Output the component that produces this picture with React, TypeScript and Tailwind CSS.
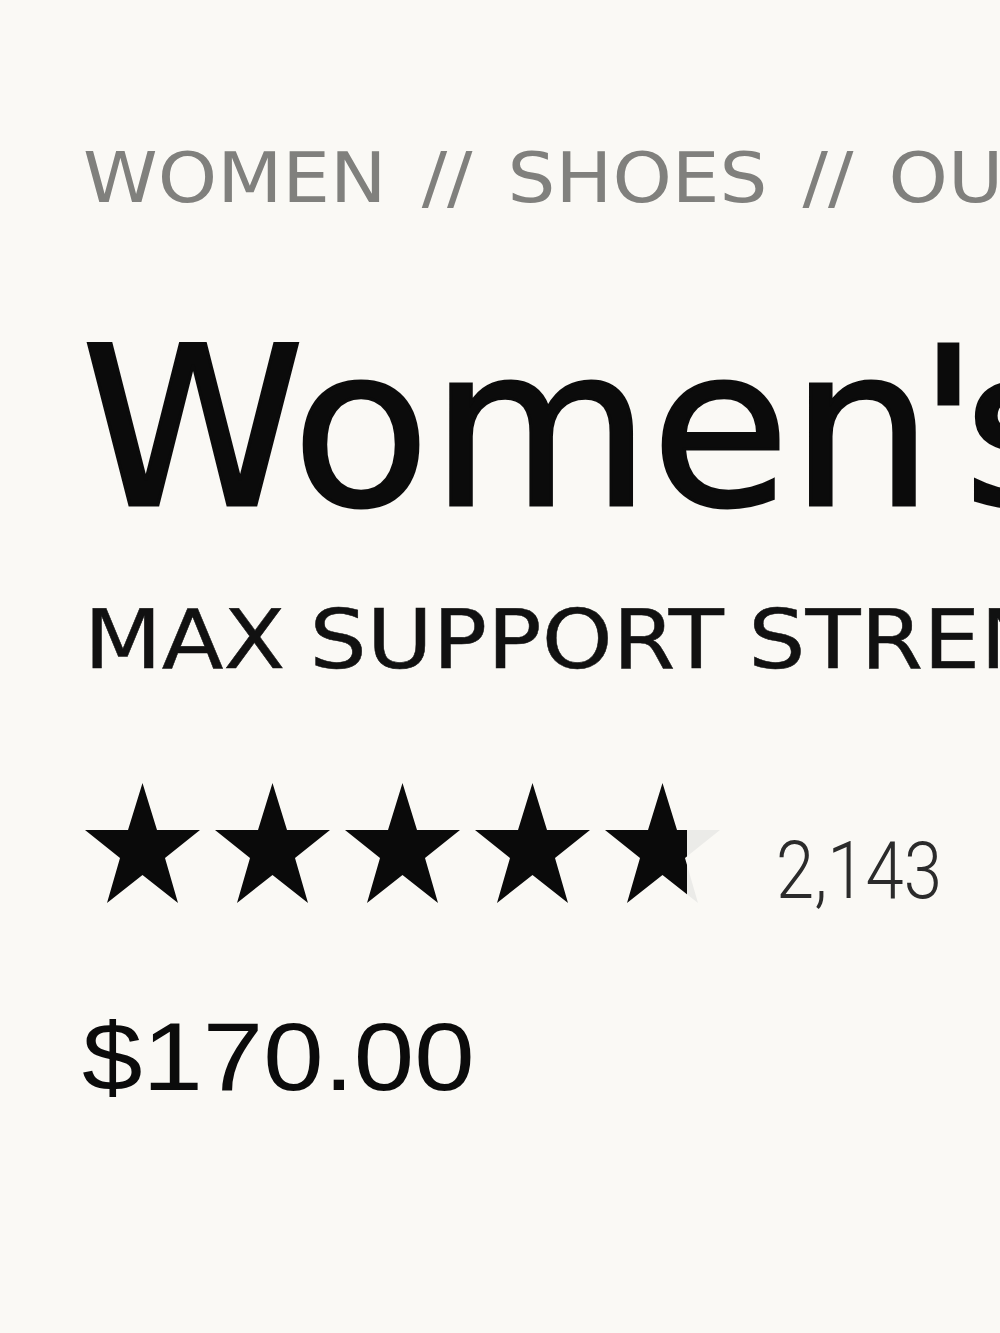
const crumbs = ["WOMEN", "SHOES", "OUTLET"];
const ratings = [1, 1, 1, 1, 0.71];

const STAR = "57.5,0 72,47 115,47 80,75 93,120 57.5,92 22,120 35,75 0,47 43,47";

function Star({ fill, id }: { fill: number; id: string }) {
  return (
    <svg viewBox="0 0 115 120" className="h-[120px] w-[115px] shrink-0">
      <defs>
        <linearGradient id={id} x1="0" x2="1" y1="0" y2="0">
          <stop offset={fill} stopColor="#0a0a0a" />
          <stop offset={fill} stopColor="#ebebe8" />
        </linearGradient>
      </defs>
      <polygon points={STAR} fill={`url(#${id})`} />
    </svg>
  );
}

export default function App() {
  return (
    <main className="h-screen w-full overflow-hidden bg-[#faf9f5] pl-[85px] pt-[144px] font-['DejaVu_Sans',sans-serif]">
      {/* breadcrumb */}
      <nav className="-ml-[2px] flex origin-left scale-x-[1.095] gap-[32px] whitespace-nowrap text-[69px] leading-none text-[#80807d]">
        {crumbs.map((c, i) => (
          <span key={c} className="flex gap-[32px]">
            {i > 0 && <span>//</span>}
            <span>{c}</span>
          </span>
        ))}
      </nav>

      <h1 className="-ml-[4px] mt-[104px] origin-left scale-x-[1.02] whitespace-nowrap text-[222px] leading-none text-[#0b0b0b] [-webkit-text-stroke:3px_#0b0b0b]">
        Women<span className="-ml-[16px] -mr-[16px]">'</span>s Gaviota 5
      </h1>

      <p className="-ml-[1px] mt-[60px] origin-left scale-x-[1.1] whitespace-nowrap text-[82px] leading-none text-[#111] [word-spacing:-4px] [-webkit-text-stroke:0.5px_#111]">
        MAX SUPPORT STRENGTH
      </p>

      {/* rating */}
      <div className="mt-[102px] flex items-start">
        <div className="flex gap-[15px]">
          {ratings.map((r, i) => (
            <Star key={i} fill={r} id={`star-${i}`} />
          ))}
        </div>
        <span className="ml-[56px] mt-[48px] inline-block origin-left scale-x-[0.86] font-['Roboto',sans-serif] text-[80px] font-light leading-none text-[#2b2b2b]">
          2,143
        </span>
      </div>

      <div className="-ml-[3px] mt-[97px]">
        <span className="inline-block origin-left scale-x-[1.12] font-['Liberation_Sans',sans-serif] text-[97px] leading-none text-[#0b0b0b]">
          $170.00
        </span>
      </div>
    </main>
  );
}
